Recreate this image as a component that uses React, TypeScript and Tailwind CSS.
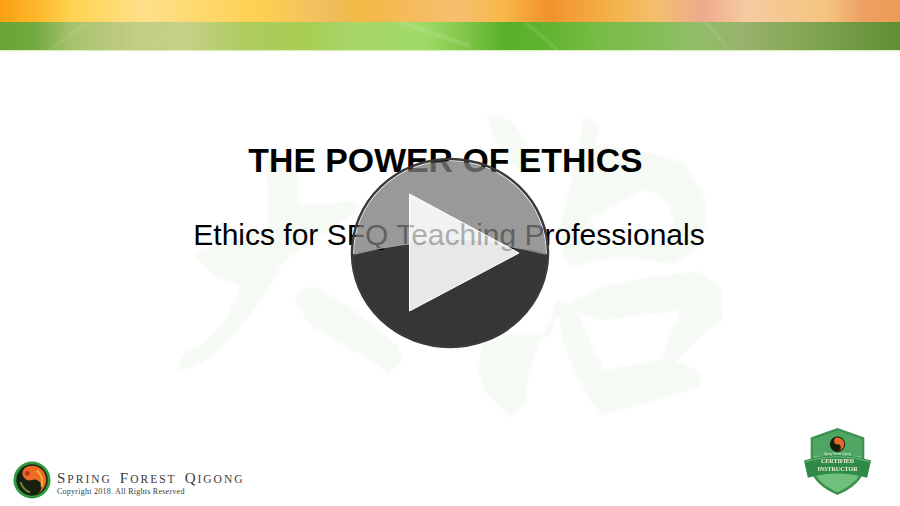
const Watermark = () => (
  <svg
    className="absolute left-0 top-0 blur-[1.2px]"
    width="900"
    height="506"
    viewBox="0 0 900 506"
    fill="#f5faf4"
    stroke="#f5faf4"
    strokeWidth="3"
    strokeLinejoin="round"
  >
    <path d="M268 160Q282 156 296 160L296 205Q325 206 350 203L360 208Q340 222 320 233L280 263Q270 285 257 303L233 333Q220 348 203 360L180 370L180 365L187 353L203 347L227 320L243 285L213 273L195 255L270 228Z" />
    <path d="M298 293L313 288L347 307L397 347L400 360L388 373L377 362L337 340L310 323L298 303Z" />
    <g transform="translate(470 105) scale(0.3333)" strokeWidth="9">
      <path d="M55 30L120 50L165 110L200 200L150 190L90 130Z" />
      <path
        fillRule="evenodd"
        d="M345 40L385 65L372 120L530 150Q600 160 640 180L700 280L705 350L680 430L610 470L450 450L300 480L285 450L275 370L300 260L330 140ZM350 340L530 245L590 285L620 350L580 420L420 430Z"
      />
      <path
        fillRule="evenodd"
        d="M270 610L400 550L540 520L690 505L750 555L755 640L700 680L650 730L610 770L680 800L690 840L560 880L400 925L360 880L310 780L280 700ZM320 620L400 640L640 610L600 700L580 770L400 800L360 720Z"
      />
      <path d="M260 590L240 690L130 690L40 720L30 800L50 860L120 930L165 890L170 800L200 720L280 600Z" />
    </g>
  </svg>
);

const PlayButton = () => (
  <svg className="absolute left-[340px] top-[148px]" width="220" height="210" viewBox="340 148 220 210">
    <defs>
      <mask id="hole">
        <rect x="340" y="148" width="220" height="210" fill="white" />
        <path d="M409.5 194L519 253L409.5 311Z" fill="black" />
      </mask>
    </defs>
    <g mask="url(#hole)">
      <path d="M354.01 254.3Q450 229 545.99 254.3A96 92 0 1 0 354.01 254.3Z" fill="#7c7c7c" fillOpacity="0.776" />
      <path d="M352.01 254.3Q450 229 547.99 254.3A98 94 0 0 1 352.01 254.3Z" fill="#000000" fillOpacity="0.79" />
      <path d="M354.01 254.3Q450 229 545.99 254.3" fill="none" stroke="#b8b8b8" strokeWidth="0.8" />
    </g>
    <ellipse cx="450" cy="253" rx="98" ry="94" fill="none" stroke="#3a3a3a" strokeWidth="2.5" />
    <path d="M409.5 194L519 253L409.5 311Z" fill="#ededed" fillOpacity="0.73" />
    <path d="M409.5 243.8Q450 236 500 243.2L519 253L409.5 311Z" fill="#000000" fillOpacity="0.04" />
    <path d="M409.5 194L519 253L409.5 311Z" fill="none" stroke="#ffffff" strokeWidth="1" />
  </svg>
);

const SfqLogo = ({ size }: { size: number }) => (
  <svg width={size} height={size} viewBox="0 0 40 40" className="shrink-0 blur-[0.3px]">
    <circle cx="20" cy="20" r="19.5" fill="#2f9a3c" />
    <circle cx="20" cy="20" r="16.5" fill="#16210f" />
    <path d="M20 5A15 15 0 0 1 20 35A7.5 7.5 0 0 0 20 20A7.5 7.5 0 0 1 20 5Z" fill="#ee6a24" transform="rotate(-20 20 20)" />
    <path d="M25 10Q33 17 30 27" fill="none" stroke="#f4b43c" strokeWidth="2" />
    <path d="M8 22Q10 30 18 33" fill="none" stroke="#6d8a2c" strokeWidth="2" />
    <circle cx="15" cy="13" r="2.4" fill="#b2301c" />
    <circle cx="25" cy="27" r="2.2" fill="#16210f" />
  </svg>
);

const SmallCaps = ({ word }: { word: string }) => (
  <span>
    <span className="text-[15px]">{word[0]}</span>
    {word.slice(1)}
  </span>
);

const Badge = () => (
  <svg width="67" height="69" viewBox="0 0 70 72" className="shrink-0 blur-[0.3px]">
    <path d="M35 1L63 11V44Q60 60 35 71Q10 60 7 44V11Z" fill="#3f9150" />
    <path d="M35 4L60 13V44Q57 58 35 68Q13 58 10 44V13Z" fill="#6fc07c" />
    <path d="M35 4L60 13V30H10V13Z" fill="#4fa562" />
    <path d="M0 35Q35 24 70 35L66 53Q35 44 4 53Z" fill="#2f8a48" />
    <path d="M1.5 36Q35 26 68.5 36" fill="none" stroke="#a8dcae" strokeWidth="0.6" />
    <circle cx="35" cy="18" r="8" fill="#15210f" />
    <path d="M35 11A7 7 0 0 1 35 25A3.5 3.5 0 0 0 35 18A3.5 3.5 0 0 1 35 11Z" fill="#e8692a" />
    <text x="35" y="29" textAnchor="middle" fontSize="3" fill="#d9efd9" fontFamily="Liberation Sans, sans-serif">
      Spring Forest Qigong
    </text>
    <text x="35" y="38" textAnchor="middle" fontSize="6.3" fontWeight="700" fill="#f4f1d8" fontFamily="Liberation Serif, serif">
      CERTIFIED
    </text>
    <text x="35" y="46" textAnchor="middle" fontSize="6.3" fontWeight="700" fill="#f4f1d8" fontFamily="Liberation Serif, serif">
      INSTRUCTOR
    </text>
  </svg>
);

const BandStreaks = () => (
  <svg className="absolute left-0 top-[22px] blur-[1px]" width="900" height="28" viewBox="0 0 900 28" fill="none" stroke="#ffffff">
    <path d="M50 28L85 2" strokeOpacity="0.1" strokeWidth="3" />
    <path d="M150 28L178 1" strokeOpacity="0.08" strokeWidth="2" />
    <path d="M400 0L470 24" strokeOpacity="0.12" strokeWidth="4" />
    <path d="M525 0L558 28" strokeOpacity="0.25" strokeWidth="1.5" />
    <path d="M600 28L590 2" strokeOpacity="0.08" strokeWidth="2" />
    <path d="M705 0L730 28" strokeOpacity="0.14" strokeWidth="2" />
  </svg>
);

export default function App() {
  return (
    <div className="relative flex h-[506px] w-[900px] flex-col overflow-hidden bg-white font-['Liberation_Sans',Arial,sans-serif]">
      <Watermark />
      <header className="relative flex h-[52px] shrink-0 flex-col">
        <div className="h-[22px] bg-[linear-gradient(90deg,#fb9f12_0%,#fdb72a_4%,#ffd352_8%,#ffe08a_16%,#fed050_29%,#f0be60_36%,#f3b845_40%,#f5bf6f_51%,#f7b748_56%,#f2922c_61%,#f4b24a_68%,#f3bf70_73%,#eeaa8c_78%,#f6cba0_83%,#f4c47e_92%,#ee9f62_96%,#ee9b58_100%)]" />
        <div className="h-[28px] bg-[linear-gradient(90deg,#68a535_0%,#73a93f_4%,#a8c26d_8%,#c2cd85_15%,#c5d185_21%,#aecb60_27%,#a7cd52_34%,#a8d466_38%,#a0db68_47%,#86c94e_51%,#5ab02b_56%,#5eb32e_60%,#78bc46_67%,#8fbe66_77%,#97b26c_83%,#7ea24e_91%,#5f8f35_100%)]" />
        <div className="h-[2px] bg-[linear-gradient(180deg,#d4ecae,#ffffff)]" />
        <BandStreaks />
      </header>
      <main className="relative flex flex-col items-center pt-[89px]">
        <h1 className="mr-[9px] text-[33.8px] leading-[38px] font-bold text-black">THE POWER OF ETHICS</h1>
        <p className="mr-[2px] mt-[39px] text-[30px] leading-[34px] text-black">Ethics for SFQ Teaching Professionals</p>
      </main>
      <footer className="relative mt-auto flex items-end justify-between pb-[10px] pl-[13px] pr-[29px]">
        <div className="mb-[-3px] flex items-center gap-[6px]">
          <SfqLogo size={38} />
          <div className="mt-[6px] flex flex-col font-['Liberation_Serif',serif] text-[#3a3a3a]">
            <div className="flex gap-[8px] text-[11.5px] leading-[15px] tracking-[2px]">
              <SmallCaps word="SPRING" />
              <SmallCaps word="FOREST" />
              <SmallCaps word="QIGONG" />
            </div>
            <div className="text-[8px] leading-[9px] tracking-[0.25px]">Copyright 2018. All Rights Reserved</div>
          </div>
        </div>
        <Badge />
      </footer>
      <PlayButton />
    </div>
  );
}
